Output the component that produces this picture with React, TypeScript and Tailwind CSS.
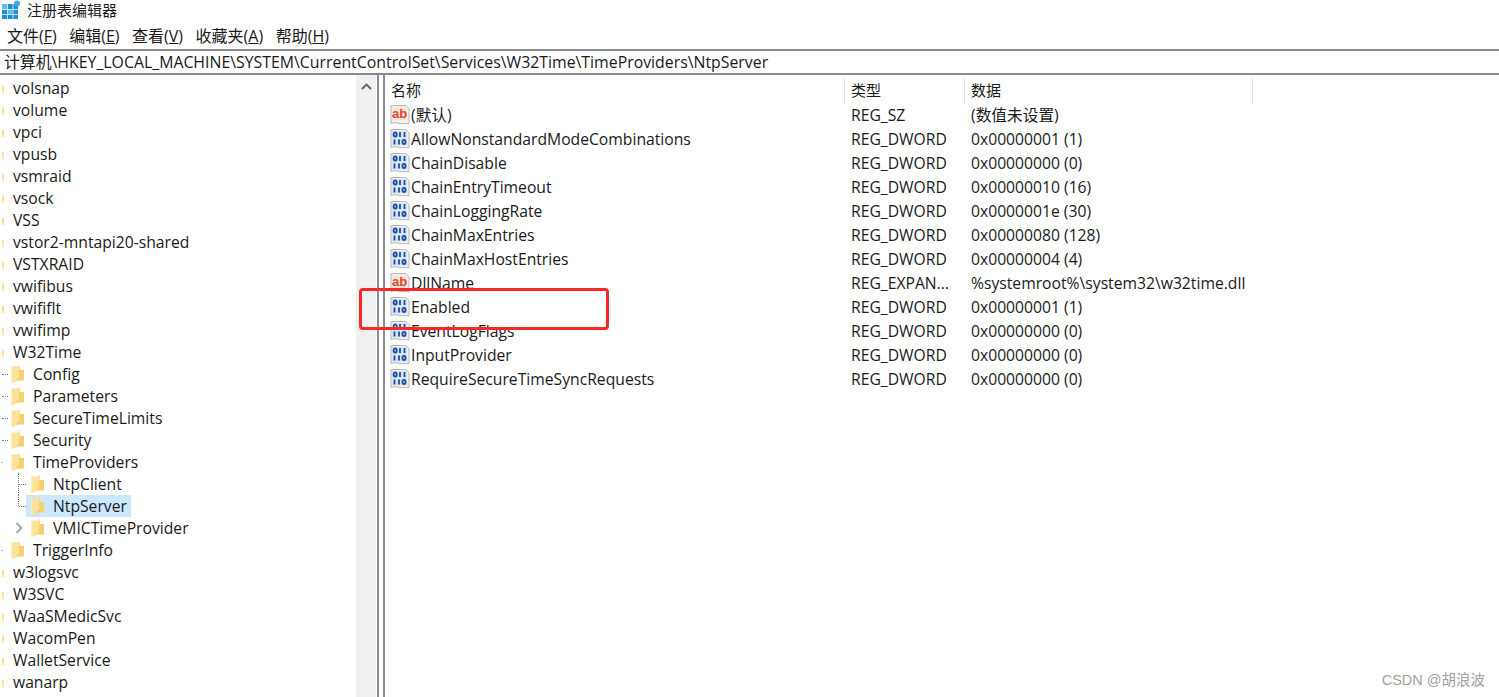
const font = { fontFamily: '"Open Sans", "Noto Sans CJK SC", sans-serif' };

type TreeItem = { name: string; depth: number; stub?: boolean; last?: boolean; selected?: boolean; arrow?: boolean };

const tree: TreeItem[] = [
  { name: "volsnap", depth: 0 },
  { name: "volume", depth: 0 },
  { name: "vpci", depth: 0 },
  { name: "vpusb", depth: 0 },
  { name: "vsmraid", depth: 0 },
  { name: "vsock", depth: 0 },
  { name: "VSS", depth: 0 },
  { name: "vstor2-mntapi20-shared", depth: 0 },
  { name: "VSTXRAID", depth: 0 },
  { name: "vwifibus", depth: 0 },
  { name: "vwififlt", depth: 0 },
  { name: "vwifimp", depth: 0 },
  { name: "W32Time", depth: 0 },
  { name: "Config", depth: 1, stub: true },
  { name: "Parameters", depth: 1, stub: true },
  { name: "SecureTimeLimits", depth: 1, stub: true },
  { name: "Security", depth: 1, stub: true },
  { name: "TimeProviders", depth: 1 },
  { name: "NtpClient", depth: 2 },
  { name: "NtpServer", depth: 2, selected: true, last: true },
  { name: "VMICTimeProvider", depth: 2, arrow: true },
  { name: "TriggerInfo", depth: 1 },
  { name: "w3logsvc", depth: 0 },
  { name: "W3SVC", depth: 0 },
  { name: "WaaSMedicSvc", depth: 0 },
  { name: "WacomPen", depth: 0 },
  { name: "WalletService", depth: 0 },
  { name: "wanarp", depth: 0 },
];

const values = [
  { name: "(默认)", type: "REG_SZ", data: "(数值未设置)", str: true },
  { name: "AllowNonstandardModeCombinations", type: "REG_DWORD", data: "0x00000001 (1)" },
  { name: "ChainDisable", type: "REG_DWORD", data: "0x00000000 (0)" },
  { name: "ChainEntryTimeout", type: "REG_DWORD", data: "0x00000010 (16)" },
  { name: "ChainLoggingRate", type: "REG_DWORD", data: "0x0000001e (30)" },
  { name: "ChainMaxEntries", type: "REG_DWORD", data: "0x00000080 (128)" },
  { name: "ChainMaxHostEntries", type: "REG_DWORD", data: "0x00000004 (4)" },
  { name: "DllName", type: "REG_EXPAN...", data: "%systemroot%\\system32\\w32time.dll", str: true },
  { name: "Enabled", type: "REG_DWORD", data: "0x00000001 (1)" },
  { name: "EventLogFlags", type: "REG_DWORD", data: "0x00000000 (0)" },
  { name: "InputProvider", type: "REG_DWORD", data: "0x00000000 (0)" },
  { name: "RequireSecureTimeSyncRequests", type: "REG_DWORD", data: "0x00000000 (0)" },
];

const menus = [
  ["文件(", "F", ")"],
  ["编辑(", "E", ")"],
  ["查看(", "V", ")"],
  ["收藏夹(", "A", ")"],
  ["帮助(", "H", ")"],
];

function AppIcon() {
  return (
    <svg width="22" height="20" viewBox="0 0 22 20" className="shrink-0">
      <rect x="2" y="4" width="16" height="15" fill="#1f8fd0" />
      <path d="M2 9.5h16M2 14.5h16M7.5 4v15M13 4v15" stroke="#bfe3f7" strokeWidth="1" />
      <rect x="2" y="4" width="5" height="5" fill="#5fbcec" />
      <rect x="8" y="10" width="5" height="4" fill="#5fbcec" />
      <circle cx="17" cy="3.5" r="3" fill="#4aa5dc" />
    </svg>
  );
}

function Folder() {
  return (
    <svg width="13" height="18" viewBox="0 0 13 18" className="shrink-0">
      <path d="M0 1.5h8.5V14L3 17.5H0z" fill="#fbdf94" />
      <path d="M0 1.5h1.5v16H0z" fill="#fdeebf" />
      <path d="M7 .5h1.5V5H13v10.5H3V5h4z" fill="#f7cf6c" />
      <path d="M3 5l5-4.5V12l-5 5.5z" fill="#fce29c" />
    </svg>
  );
}

function PaperIcon({ str }: { str?: boolean }) {
  return (
    <svg width="20" height="20" viewBox="0 0 20 20" className="shrink-0">
      <path d="M1 .5h15l3 3V19c-3 -1.5 -5 .5 -9 -.5s-6 -1 -9 0z" fill="#f2f2f2" stroke="#b5b5b5" />
      {str ? (
        <>
          <rect x="2" y="2.5" width="15" height="12.5" fill="#fbe3da" />
          <text x="9.5" y="13" textAnchor="middle" fontSize="13" fontWeight="700" fill="#d9492a" fontFamily="Liberation Sans, sans-serif">
            ab
          </text>
        </>
      ) : (
        <>
          <rect x="2" y="2" width="15" height="14.5" fill="#d6e4f7" />
          <g fill="none" stroke="#1f4f9e" strokeWidth="1.8">
            <ellipse cx="5.2" cy="5.5" rx="1.6" ry="2" />
            <path d="M10 3v5M14.5 3v5" />
            <path d="M4.5 10.5v5M9 10.5v5" />
            <ellipse cx="14" cy="13" rx="1.6" ry="2" />
          </g>
        </>
      )}
    </svg>
  );
}

function TreeRow({ item }: { item: TreeItem }) {
  if (item.depth === 0) {
    return (
      <div className="flex items-center h-[22px]">
        <div className="w-[2px] h-[7px] mt-[3px] ml-[2px] mr-[9px] bg-[#fbe29a] shrink-0" />
        <span className="leading-[22px]">{item.name}</span>
      </div>
    );
  }
  if (item.depth === 1) {
    return (
      <div className="flex items-center h-[22px]">
        <div className="w-[11px] shrink-0 pl-[2px]">
          {item.stub ? <div className="w-[6px] border-t border-dotted border-[#777]" /> : <div className="w-[1px] h-[1px] bg-[#777]" />}
        </div>
        <Folder />
        <span className="ml-[9px] leading-[22px]">{item.name}</span>
      </div>
    );
  }
  return (
    <div className="flex items-center h-[22px]">
      <div className="w-[26px] h-full shrink-0 flex items-start">
        {item.arrow ? (
          <svg width="8" height="12" viewBox="0 0 8 12" className="ml-[15px] mt-[5px]">
            <path d="M1.5 1l5 5-5 5" fill="none" stroke="#a6a6a6" strokeWidth="1.8" />
          </svg>
        ) : (
          <div className={`ml-[18px] w-[8px] border-l border-dotted border-[#777] ${item.last ? "h-[11px]" : "h-full"} relative`}>
            <div className="w-[7px] mt-[11px] border-t border-dotted border-[#777]" />
          </div>
        )}
      </div>
      <div className={`flex items-center h-[22px] pl-[5px] pr-[4px] ${item.selected ? "bg-[#cce8ff]" : ""}`}>
        <Folder />
        <span className="ml-[9px] leading-[22px]">{item.name}</span>
      </div>
    </div>
  );
}

export default function App() {
  return (
    <div className="w-[1499px] h-[697px] overflow-hidden bg-white text-[15.7px] text-[#1a1a1a] relative flex flex-col" style={font}>
      <div className="h-[22px] flex items-center shrink-0 text-[15px] pb-[2px]">
        <AppIcon />
        <span className="ml-[5px] leading-[20px]">注册表编辑器</span>
      </div>
      <div className="h-[27px] flex items-center shrink-0 gap-[12.5px] pl-[7px] text-[16px]">
        {menus.map((m) => (
          <span key={m[1]} className="leading-[20px]">
            {m[0]}
            <span className="underline">{m[1]}</span>
            {m[2]}
          </span>
        ))}
      </div>
      <div className="h-[26px] shrink-0 flex items-center border-y-2 border-[#8a8a8a] pl-[4px] text-[15.85px]">
        <span className="leading-[22px] whitespace-nowrap">计算机\HKEY_LOCAL_MACHINE\SYSTEM\CurrentControlSet\Services\W32Time\TimeProviders\NtpServer</span>
      </div>
      <div className="flex-1 flex min-h-0">
        <div className="w-[356px] shrink-0 pt-[2px] overflow-hidden">
          {tree.map((t) => (
            <TreeRow key={t.name} item={t} />
          ))}
        </div>
        <div className="w-[20px] shrink-0 bg-[#f0f0f0] flex justify-center pt-[8px]">
          <svg width="11" height="7" viewBox="0 0 11 7">
            <path d="M1 6l4.5-4.5L10 6" fill="none" stroke="#606060" strokeWidth="1.8" />
          </svg>
        </div>
        <div className="w-[8px] ml-[1px] shrink-0 border-x-2 border-[#8c8c96] bg-white" />
        <div className="flex-1 flex flex-col min-w-0">
          <div className="h-[26px] flex shrink-0 text-[15px] mt-[2px]">
            <div className="w-[460px] pl-[6px] border-r border-[#e5e5e5] leading-[26px] shrink-0">名称</div>
            <div className="w-[120px] pl-[6px] border-r border-[#e5e5e5] leading-[26px] shrink-0">类型</div>
            <div className="w-[288px] pl-[6px] border-r border-[#e5e5e5] leading-[26px] shrink-0">数据</div>
          </div>
          {values.map((v) => (
            <div key={v.name} className="h-[24px] flex items-center shrink-0 leading-[24px]">
              <div className="w-[460px] pl-[5px] flex items-center shrink-0 gap-[1px] whitespace-nowrap">
                <PaperIcon str={v.str} />
                <span>{v.name}</span>
              </div>
              <div className="w-[120px] pl-[6px] shrink-0 whitespace-nowrap">{v.type}</div>
              <div className="pl-[6px] whitespace-nowrap">{v.data}</div>
            </div>
          ))}
        </div>
      </div>
      {/* annotation over the screenshot */}
      <div className="absolute left-[359px] top-[288px] w-[250px] h-[42px] border-[3px] border-[#f5282a] rounded-[4px]" />
      <div className="absolute right-[14px] top-[671px] text-[14.5px] text-[#a0a0a0] leading-[18px]" style={{ fontFamily: '"Liberation Sans", "Noto Sans CJK SC", sans-serif' }}>
        CSDN @胡浪波
      </div>
    </div>
  );
}
